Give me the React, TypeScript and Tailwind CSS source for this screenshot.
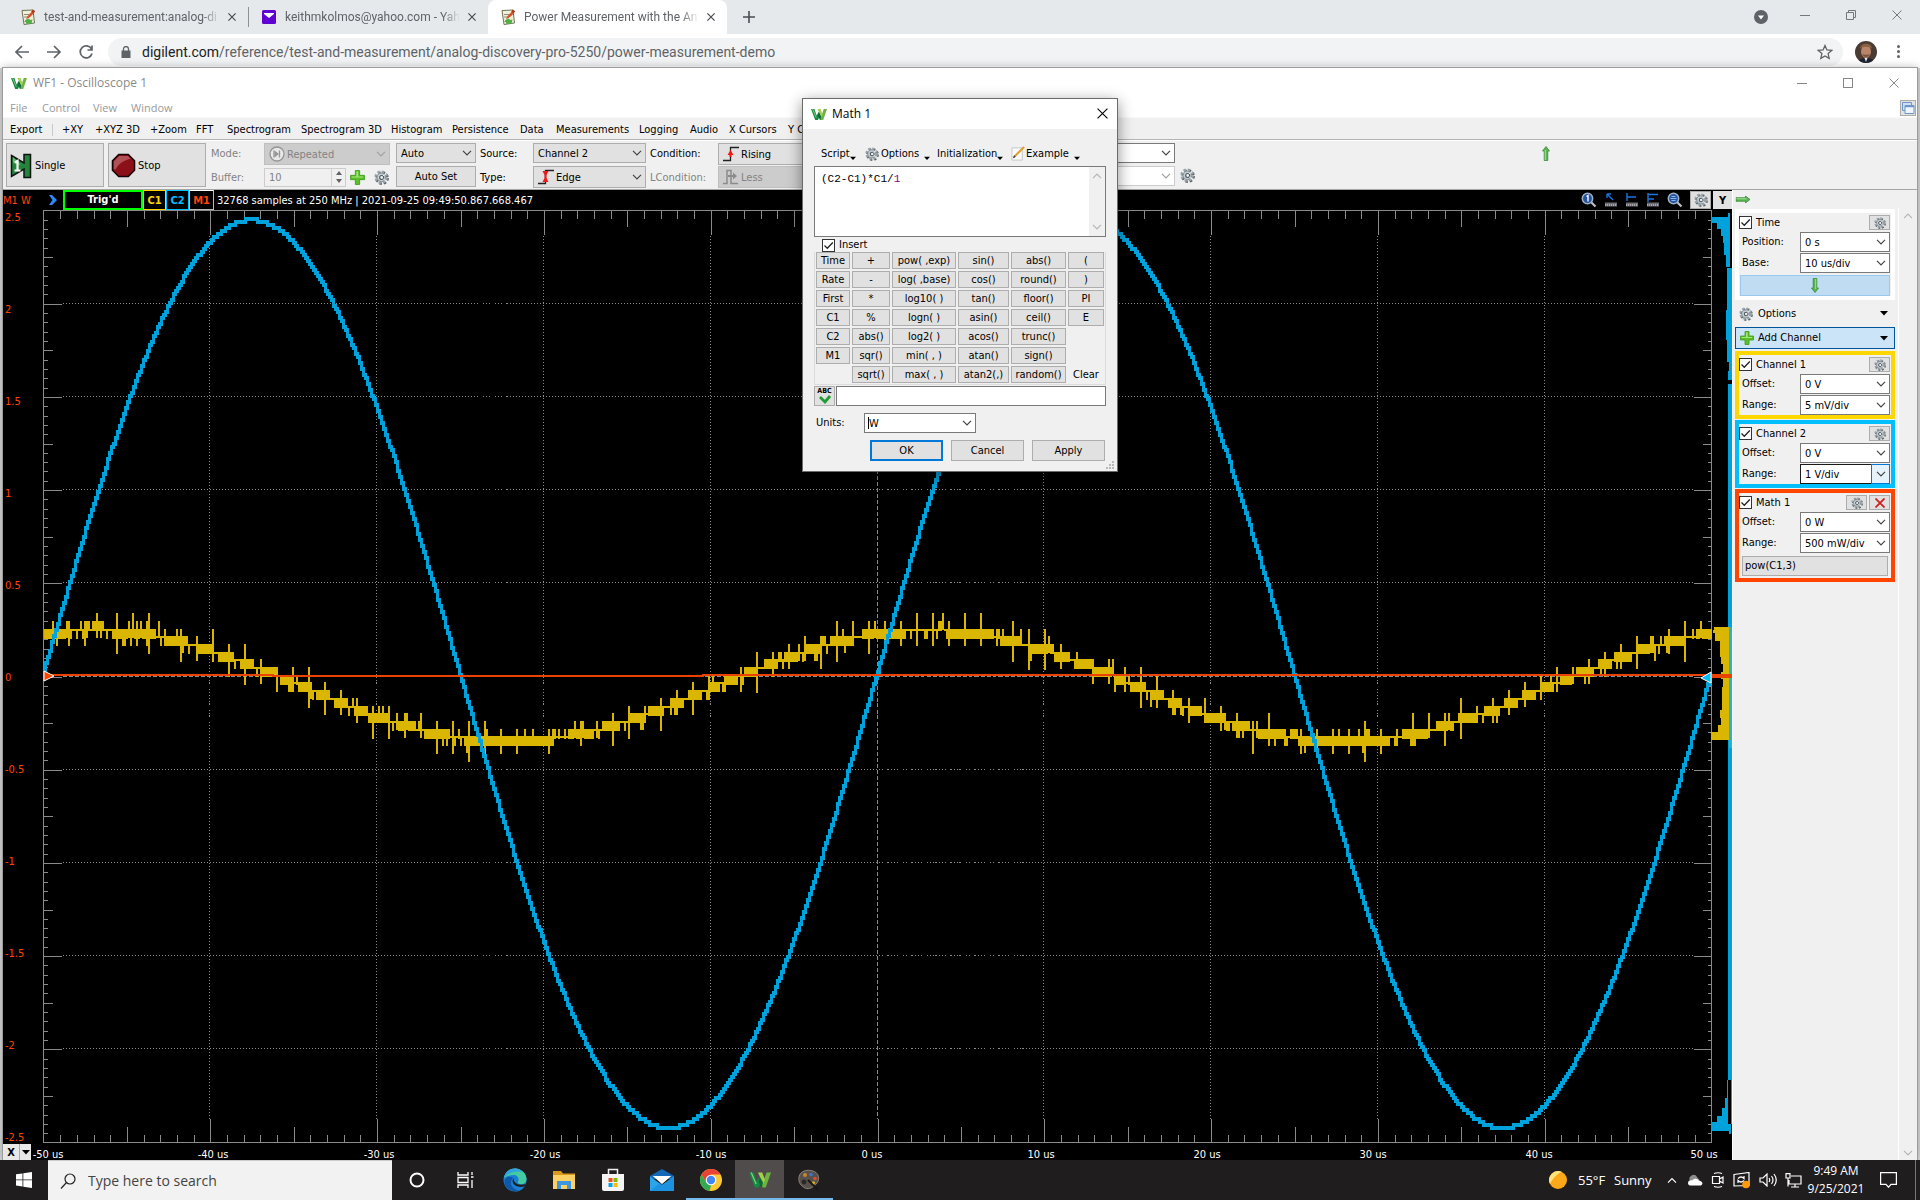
import { ReactNode, useState } from "react";
import clsx from "clsx";

const tahoma = "font-[family-name:'DejaVu_Sans_Condensed','DejaVu_Sans',sans-serif]";
const segoe = "font-[family-name:'Open_Sans','Noto_Sans',sans-serif]";

/* ---------- icons ---------- */

const Chevron = ({ className }: { className?: string }) => (
  <svg viewBox="0 0 10 6" className={clsx("w-[10px] h-[6px]", className)} fill="none" stroke="currentColor" strokeWidth="1.2">
    <path d="M1 .8 5 4.8 9 .8" />
  </svg>
);

const Caret = ({ className }: { className?: string }) => (
  <svg viewBox="0 0 8 5" className={clsx("w-2 h-[5px] shrink-0", className)}>
    <path d="M0 0h8L4 4.5Z" fill="#000" />
  </svg>
);

const Gear = ({ className = "size-[14px]" }: { className?: string }) => (
  <svg viewBox="0 0 16 16" className={clsx("shrink-0", className)}>
    <circle cx="8.6" cy="8.6" r="6" fill="none" stroke="#5d666b" strokeWidth="2.6" strokeDasharray="2.6 2.1" />
    <circle cx="7.6" cy="7.6" r="6" fill="none" stroke="#9aa5ab" strokeWidth="2.4" strokeDasharray="2.6 2.1" />
    <circle cx="7.8" cy="7.8" r="4.6" fill="#c3ccd1" stroke="#7f8a90" strokeWidth="1" />
    <circle cx="8.2" cy="8" r="2.1" fill="#eef1f3" stroke="#4c5459" strokeWidth="1.2" />
    <path d="M9.5 6.2 13 4.2M9.8 9.5l3 2.2" stroke="#eef1f3" strokeWidth="1" />
  </svg>
);

const Plus = ({ className = "size-[14px]" }: { className?: string }) => (
  <svg viewBox="0 0 14 14" className={clsx("shrink-0", className)}>
    <path d="M5 .5h4V5h4.5v4H9v4.5H5V9H.5V5H5Z" fill="#5cbf2a" stroke="#3e9a1c" strokeWidth=".8" />
    <path d="M6 1.5h1.6V6H12v1H1.5V6H6Z" fill="#a5e67c" />
  </svg>
);

const WaveLogo = ({ className = "size-4" }: { className?: string }) => (
  <svg viewBox="0 0 16 13" className={clsx("shrink-0", className)}>
    <path d="M0 1h3.400l2.200 6.400L8 3.500l1.400 3.200L7 12H4.200Z" fill="#158a43" />
    <path d="m8 3.500 1.400 3.200 1.400 2L9.600 12H8.900L7 7.600Z" fill="#0c6a38" />
    <path d="M12.800 1H16l-3.800 11H9.600l.2-2.600Z" fill="#6cb33f" />
    <path d="M6.500 1H9.600l2 5.400L10.600 9 8.200 4.600Z" fill="#a4cf4c" />
    <path d="m1.600 1 3.600 8.500" stroke="#8fd07e" strokeWidth=".9" fill="none" />
  </svg>
);

const WikiIcon = () => (
  <svg viewBox="0 0 16 16" className="size-4 shrink-0">
    <path d="M2 1.5 13 1l1.5 13L4 15.5Z" fill="#f3efd6" stroke="#6d7358" strokeWidth="1" />
    <path d="M4 5.5h5M4 8h4M4.5 12.5h3" stroke="#8b8f7a" strokeWidth="1" />
    <path d="M6 10c1-3 3.5-5 5.5-7l2 1.6C11.5 7 9 9.5 6 10Z" fill="#d6512c" />
    <path d="m11 3 2-2.5 2.2 1.7-1.7 2.4Z" fill="#b63412" />
    <path d="m5 11 4-1.5 1 1.5 2.5-.5-1 4-5 .5Z" fill="#4fae45" />
  </svg>
);

const YahooIcon = () => (
  <svg viewBox="0 0 16 14" className="w-4 h-[14px] shrink-0">
    <rect x="1" y="0" width="14" height="14" rx="1.5" fill="#5f01d1" />
    <path d="M3 3h10v1L8 8 3 4Z" fill="#fff" />
  </svg>
);

const Cross = ({ className = "size-[10px]", width = 1 }: { className?: string; width?: number }) => (
  <svg viewBox="0 0 10 10" className={clsx("shrink-0", className)} stroke="currentColor" strokeWidth={width}>
    <path d="m.5.5 9 9m0-9-9 9" />
  </svg>
);

const EdgeIcon = ({ both, muted }: { both?: boolean; muted?: boolean }) => (
  <svg viewBox="0 0 16 16" className="size-4" fill="none">
    {muted ? (
      <>
        <path d="M0 14.5h4v-13h4v13h7" stroke="#8b8b8b" strokeWidth="1.5" />
        <path d="M5 6h5V3.5L14 7l-4 3.5V8H5Z" fill="#8b8b8b" />
      </>
    ) : (
      <>
        <path d="M0 14.5h7.5V1.5H16" stroke="#222" strokeWidth="1.3" />
        {both ? (
          <path d="M4.500 2h6L8.500 6v3l2 4h-6l2-4V6Z" fill="#f01818" />
        ) : (
          <path d="m7.5 4 3 5h-2v2h-2V9h-2Z" fill="#f01818" />
        )}
      </>
    )}
  </svg>
);

const RepeatIcon = () => (
  <svg viewBox="0 0 16 16" className="size-4">
    <circle cx="8" cy="8" r="7" fill="#e8e8e8" stroke="#969696" strokeWidth="1.3" />
    <path d="M5.5 4.5v7l4.500-3.500Z" fill="#969696" />
    <path d="M5 4.5v7M10.500 4.500v7" stroke="#969696" strokeWidth="1.3" />
  </svg>
);

const GreenArrow = ({ className }: { className?: string }) => (
  <svg viewBox="0 0 8 15" className={clsx("w-2 h-[15px]", className)}>
    <path d="M4 .5 7.5 5H5.8v9.5H2.2V5H.5Z" fill="#5bb552" stroke="#2f7f2e" strokeWidth=".7" />
    <path d="M3.3 4v10" stroke="#a8dd9d" strokeWidth="1" />
  </svg>
);

const Lens = ({ label }: { label: string }) => (
  <svg viewBox="0 0 16 16" className="size-4">
    <path d="m10 10 4.5 4.5" stroke="#b9bfc7" strokeWidth="2.2" />
    <circle cx="6.5" cy="6.5" r="5.2" fill="#24549f" stroke="#9fb0c6" strokeWidth="1.5" />
    {label === "1" ? (
      <path d="M5.5 4.5 7 3.5V9.5" stroke="#fff" strokeWidth="1.4" fill="none" />
    ) : (
      <path d="M3.5 6.5h6M4.5 4.5h4M4.5 8.5h4" stroke="#8fb4ea" strokeWidth="1" />
    )}
  </svg>
);

const CursorIcon = ({ d }: { d: string }) => (
  <svg viewBox="0 0 14 14" className="size-[14px]">
    <path d="M1 11.5h12" stroke="#6e6e76" strokeWidth="4" />
    <path d="M1 12h12" stroke="#a5a5aa" strokeWidth="2" strokeDasharray="1 1" />
    <path d={d} stroke="#1a76e0" strokeWidth="1.4" fill="none" />
  </svg>
);

/* ---------- controls ---------- */

const Select = ({
  label,
  value,
  className,
  tone = "gray",
  icon,
  disabled,
}: {
  label: string;
  value: string;
  className?: string;
  tone?: "gray" | "white" | "muted" | "faint" | "focus";
  icon?: ReactNode;
  disabled?: boolean;
}) => (
  <div
    className={clsx(
      "relative border",
      tone === "gray" && "bg-[#e1e1e1] border-[#adadad]",
      tone === "white" && "bg-white border-[#7a7a7a]",
      tone === "focus" && "bg-white border-[#1a1a1a]",
      tone === "muted" && "bg-[#cccccc] border-[#bfbfbf] text-[#838383]",
      tone === "faint" && "bg-white border-[#cccccc] text-[#a0a0a0]",
      className,
    )}
  >
    {icon && <span className="absolute left-1 inset-y-0 flex items-center pointer-events-none">{icon}</span>}
    <select
      aria-label={label}
      disabled={disabled}
      className={clsx("appearance-none block w-full h-full bg-transparent pt-px pr-4 outline-none opacity-100", icon ? "pl-[22px]" : "pl-1")}
    >
      <option>{value}</option>
    </select>
    <span
      className={clsx(
        "absolute right-0 inset-y-0 w-[17px] flex items-center justify-center pointer-events-none",
        tone === "focus" && "bg-[#e5f1fb] outline outline-[#0078d7]",
        tone === "muted" || tone === "faint" ? "text-[#a0a0a0]" : "text-[#444]",
      )}
    >
      <Chevron />
    </span>
  </div>
);

const CheckBox = ({ label }: { label: string }) => {
  const [on, setOn] = useState(true);
  return (
    <label className="flex items-center gap-1">
      <span className="relative flex">
        <input type="checkbox" checked={on} onChange={() => setOn(!on)} className="appearance-none size-[13px] border border-[#333] bg-white" />
        {on && (
          <svg viewBox="0 0 13 13" className="absolute inset-0 size-[13px] pointer-events-none" fill="none" stroke="#222" strokeWidth="1.3">
            <path d="m2.5 6.5 2.8 2.8L10.8 3.5" />
          </svg>
        )}
      </span>
      {label}
    </label>
  );
};

/* ---------- browser behind the window ---------- */

const Tab = ({ title, icon, active, className }: { title: string; icon: ReactNode; active?: boolean; className: string }) => (
  <div className={clsx("flex items-center h-[34px] gap-2", active && "bg-white rounded-t-lg", className)}>
    {icon}
    <span className="flex-1 whitespace-nowrap mask-r-from-90%">{title}</span>
    <button aria-label="Close tab" className="mr-3 text-[#4a4d51]">
      <Cross className="size-2" width={1.5} />
    </button>
  </div>
);

const Browser = () => (
  <div className={clsx("text-[12px] text-[#5f6368]", segoe)}>
    <div className="flex items-center h-[34px] bg-[#e5e9ec] font-[family-name:Roboto,'Open_Sans',sans-serif]">
      <Tab title="test-and-measurement:analog-di" icon={<WikiIcon />} className="w-[228px] ml-5" />
      <div className="w-px h-5 bg-[#8d9196]" />
      <Tab title="keithmkolmos@yahoo.com - Yah" icon={<YahooIcon />} className="w-[239px] pl-3" />
      <Tab title="Power Measurement with the An" icon={<WikiIcon />} active className="w-[239px] pl-3" />
      <button aria-label="New tab" className="ml-4">
        <svg viewBox="0 0 12 12" className="size-3" stroke="#4a4d51" strokeWidth="1.6">
          <path d="M6 0v12M0 6h12" />
        </svg>
      </button>
      <div className="flex-1" />
      <svg viewBox="0 0 14 14" className="size-[14px]">
        <circle cx="7" cy="7" r="7" fill="#5f6368" />
        <path d="M4 5.5h6L7 9.5Z" fill="#fff" />
      </svg>
      <div className="flex items-center gap-9 ml-8 mr-[18px] mb-1 text-[#777]">
        <button aria-label="Minimize browser" className="w-[10px] h-px bg-[#777]" />
        <button aria-label="Restore browser">
          <svg viewBox="0 0 10 10" className="size-[10px]" fill="none" stroke="currentColor">
            <path d="M.5 2.5h7v7h-7ZM2.5 2.5v-2h7v7h-2" />
          </svg>
        </button>
        <button aria-label="Close browser">
          <Cross />
        </button>
      </div>
    </div>
    <div className="flex items-center h-[34px] pt-px bg-white text-[#5f6368]">
      <div className="flex items-center gap-4 pl-[14px] w-[108px]">
        {["M15 8H2M8 2 2 8l6 6", "M1 8h13M8 2l6 6-6 6", "M13.5 5A6 6 0 1 0 14 9.5M14 1.5V6H9.5"].map((d, i) => (
          <button key={d} aria-label={["Back", "Forward", "Reload"][i]}>
            <svg viewBox="0 0 16 16" className="size-4" fill="none" stroke="#5f6368" strokeWidth="1.7">
              <path d={d} />
            </svg>
          </button>
        ))}
      </div>
      <div className="flex items-center flex-1 h-7 rounded-full bg-[#f1f3f4] pl-[13px] pr-[10px]">
        <svg viewBox="0 0 10 12" className="w-[10px] h-3 mr-[11px]">
          <path d="M.5 4.5h9V12h-9Z" fill="#5f6368" />
          <path d="M2.5 5V3a2.5 2.5 0 0 1 5 0v2" fill="none" stroke="#5f6368" strokeWidth="1.3" />
        </svg>
        <span className="text-[14px] font-[family-name:Roboto,'Open_Sans',sans-serif]">
          <span className="text-[#202124]">digilent.com</span>/reference/test-and-measurement/analog-discovery-pro-5250/power-measurement-demo
        </span>
        <svg viewBox="0 0 16 16" className="size-4 ml-auto" fill="none" stroke="#5f6368" strokeWidth="1.3">
          <path d="m8 1.5 1.9 4.5 4.9.4-3.7 3.2 1.1 4.8L8 11.9l-4.2 2.5 1.1-4.8L1.2 6.4l4.9-.4Z" />
        </svg>
      </div>
      <svg viewBox="0 0 22 22" className="size-[22px] ml-3">
        <circle cx="11" cy="11" r="11" fill="#4a3b33" />
        <ellipse cx="11" cy="10.5" rx="5" ry="6.5" fill="#b98468" />
        <path d="M5 8c0-7 12-7 12 0-1-3-11-3-12 0Z" fill="#8a6242" />
        <path d="M4 19.5c2-3.5 12-3.5 14 0-4 3.2-10 3.2-14 0Z" fill="#1d2230" />
        <path d="M9.5 17h3L11 21Z" fill="#e8e8ec" />
        <path d="M7 13c2 4 6 4 8 0-1 1-7 1-8 0Z" fill="#7a5038" />
      </svg>
      <button aria-label="Browser menu" className="ml-5 mr-5 flex flex-col gap-[2px]">
        <i className="size-[3px] rounded-full bg-[#5f6368]" />
        <i className="size-[3px] rounded-full bg-[#5f6368]" />
        <i className="size-[3px] rounded-full bg-[#5f6368]" />
      </button>
    </div>
  </div>
);

/* ---------- scope window ---------- */

const toolbarItems = [
  ["+XY", "w-[33px]"],
  ["+XYZ 3D", "w-[55px]"],
  ["+Zoom", "w-[46px]"],
  ["FFT", "w-[31px]"],
  ["Spectrogram", "w-[74px]"],
  ["Spectrogram 3D", "w-[90px]"],
  ["Histogram", "w-[61px]"],
  ["Persistence", "w-[68px]"],
  ["Data", "w-9"],
  ["Measurements", "w-[83px]"],
  ["Logging", "w-[51px]"],
  ["Audio", "w-[39px]"],
  ["X Cursors", "w-[59px]"],
  ["Y Cursors", "w-[59px]"],
];

const WindowHead = () => (
  <>
    <div className={clsx("flex items-center h-[30px] pl-2 text-[12px] text-[#8a8a8a] bg-white", segoe)}>
      <WaveLogo className="w-4 h-[13px] mr-[6px]" />
      WF1 - Oscilloscope 1
      <div className="ml-auto flex items-center gap-9 pr-[18px] text-[#888]">
        <button aria-label="Minimize" className="w-[10px] h-px bg-[#888]" />
        <button aria-label="Maximize" className="size-[10px] border border-[#888]" />
        <button aria-label="Close">
          <Cross />
        </button>
      </div>
    </div>
    <div className={clsx("flex items-center h-[19px] pl-[7px] pr-px text-[11px] text-[#9a9a9a] bg-white", segoe)}>
      <button className="w-8 text-left">File</button>
      <button className="w-[51px] text-left">Control</button>
      <button className="w-[38px] text-left">View</button>
      <button>Window</button>
      <button aria-label="Dock window" className="ml-auto size-4 border border-[#adadad] bg-[#e1e1e1]">
        <svg viewBox="0 0 14 14" className="size-[14px]">
          <path d="M1.5 1.5h9v8h-9Z" fill="#cfe0f5" stroke="#6f96c9" />
          <path d="M4 4.5h9v8H4Z" fill="#eef5fd" stroke="#6f96c9" />
          <path d="M4 5.5h9" stroke="#6f96c9" strokeWidth="1.5" />
        </svg>
      </button>
    </div>
    <div className="flex items-center h-[23px] pl-[7px] pt-[2px] border-t border-[#f8f8f8] border-b border-b-[#b4b4b4]">
      <button className="w-[42px] text-left">Export</button>
      <div className="w-px h-3 bg-[#c8c8c8] mr-[9px]" />
      {toolbarItems.map(([name, width]) => (
        <button key={name} className={clsx("text-left whitespace-nowrap shrink-0", width)}>
          {name}
        </button>
      ))}
    </div>
  </>
);

const Controls = () => (
  <div className="flex items-start h-[50px] pl-[3px] pt-[2px] border-t border-white border-b border-b-[#a5a5a5]">
    <button className="flex items-center gap-[3px] w-[98px] h-11 pt-px pl-[3px] border border-[#adadad] bg-[#e1e1e1]">
      <svg viewBox="0 0 22 26" className="w-[22px] h-[26px]">
        <path d="M1.5 2.5 14 10V1.5h6.500v23H14V16L1.500 23.500Z" fill="#23853b" stroke="#111" strokeWidth="1.5" />
        <path d="M3 4v6l8 2Z" fill="#66b878" />
        <path d="M5 9.5 7.500 8v9.500M4.500 17.500h6" stroke="#fff" strokeWidth="2.2" fill="none" />
      </svg>
      Single
    </button>
    <button className="flex items-center gap-[2px] w-[98px] h-11 pt-px pl-[2px] ml-1 border border-[#adadad] bg-[#e1e1e1]">
      <svg viewBox="0 0 26 26" className="size-[25px]">
        <path d="M8 1.5h10l6.500 6.500v10L18 24.500H8L1.500 18V8Z" fill="#8c1018" stroke="#160506" strokeWidth="1.5" />
        <path d="M8.500 3h9l3 3C14 7 7 12 5 17H3V8.500Z" fill="#c2757a" opacity=".65" />
      </svg>
      Stop
    </button>
    <div className="grid grid-cols-[53px_126px] gap-y-px ml-[5px] text-[#838383]">
      <span className="h-[22px] leading-[22px]">Mode:</span>
      <Select label="Mode" value="Repeated" tone="muted" icon={<RepeatIcon />} disabled className="h-[22px]" />
      <span className="h-[21px] leading-[23px]">Buffer:</span>
      <div className="flex items-center pt-px">
        <div className="relative w-[82px] h-[19px] border border-[#cccccc]">
          <input aria-label="Buffer" defaultValue="10" disabled className="w-full h-full pl-1 bg-transparent" />
          <span className="absolute right-0 inset-y-0 w-[14px] flex flex-col items-center justify-center border-l border-[#d0d0d0] bg-[#f0f0f0]">
            <svg viewBox="0 0 6 12" className="w-[6px] h-3" fill="#606060">
              <path d="M3 0 6 4H0ZM3 12 0 8h6Z" />
            </svg>
          </span>
        </div>
        <button aria-label="Add buffer" className="ml-1">
          <Plus className="size-[15px]" />
        </button>
        <button aria-label="Buffer settings" className="ml-[9px]">
          <Gear className="size-[15px]" />
        </button>
      </div>
    </div>
    <div className="flex flex-col gap-[3px] ml-[6px] w-[80px]">
      <Select label="Trigger mode" value="Auto" className="h-5" />
      <button className="h-[21px] pt-px border border-[#adadad] bg-[#e1e1e1]">Auto Set</button>
    </div>
    <div className="grid grid-cols-[53px_113px] gap-y-[2px] ml-1">
      <span className="leading-[21px]">Source:</span>
      <Select label="Source" value="Channel 2" className="h-5" />
      <span className="leading-[24px] h-[22px]">Type:</span>
      <Select label="Type" value="Edge" icon={<EdgeIcon both />} className="h-[22px]" />
    </div>
    <div className="grid grid-cols-[68px_113px] gap-y-px ml-1">
      <span className="leading-[21px]">Condition:</span>
      <Select label="Condition" value="Rising" icon={<EdgeIcon />} className="h-[22px]" />
      <span className="leading-[24px] h-[22px] text-[#838383]">LCondition:</span>
      <Select label="LCondition" value="Less" tone="muted" icon={<EdgeIcon muted />} disabled className="h-[22px]" />
    </div>
    <div className="flex flex-col gap-[3px] ml-[204px] w-[140px]">
      <Select label="Level" value="" tone="white" className="h-5" />
      <Select label="Hysteresis" value="" tone="faint" disabled className="h-5" />
    </div>
    <button aria-label="Trigger settings" className="ml-[5px] mt-[25px]">
      <Gear className="size-[15px]" />
    </button>
    <GreenArrow className="ml-[347px] mt-[3px]" />
  </div>
);

/* ---------- plot ---------- */

const L = 40.5;
const R = 1708.5;
const T = 0.5;
const B = 932.5;
const CX = 874.5;
const CY = 466.5;
const DX = (R - L) / 10;
const DY = (B - T) / 10;
const PERIOD = 834;

const noise = (n: number) => {
  const s = Math.sin(n * 127.1 + 11.7) * 43758.5453;
  return s - Math.floor(s);
};

const ticks = () => {
  let d = "";
  for (let i = 1; i < 100; i++) {
    const x = Math.round(L + (i * DX) / 10) + 0.5;
    const h = i % 10 === 0 ? 24 : i % 5 === 0 ? 16 : 8;
    d += `M${x} ${T}v${h}M${x} ${B}v${-h}`;
    const y = Math.round(T + (i * DY) / 10) + 0.5;
    const w = i % 10 === 0 ? 18 : i % 5 === 0 ? 9 : 4;
    d += `M${L} ${y}h${w}M${R} ${y}h${-w}`;
  }
  return d;
};

const gridLines = () => {
  let d = "";
  for (let i = 1; i < 10; i++) {
    if (i === 5) continue;
    d += `M${Math.round(L + i * DX) - 0.5} ${T + 25}V${B - 24}`;
    d += `M${L + 19} ${Math.round(T + i * DY) - 0.5}H${R - 18}`;
  }
  return d;
};

// one 3px wide bar per sample column, tall enough to touch the next one
const voltageBars = () => {
  const at = (x: number) => Math.round((464 - 454 * Math.sin((2 * Math.PI * (x - 40)) / PERIOD)) / 3) * 3;
  let d = "";
  for (let x = 41; x < 1707; x += 2) {
    const a = at(x);
    const b = at(x + 2);
    d += `M${x} ${Math.min(a, b) - 2}h3v${Math.abs(a - b) + 4}h-3Z`;
  }
  return d;
};

// sensor trace: toggles between two neighbouring ADC codes, with a spike every few samples
const currentBars = () => {
  const code = 7.7;
  const y0 = 535;
  let d = "";
  for (let x = 41; x < 1708; x += 2) {
    const v = 7.7 - 7.25 * Math.cos((2 * Math.PI * (x - 505)) / PERIOD);
    const base = Math.floor(v);
    const frac = v - base;
    let lo = base;
    let hi = base + 1;
    if (frac < 0.14) hi = base;
    if (frac > 0.86) lo = base + 1;
    if (lo === hi && noise(x) > 0.65) {
      if (noise(x + 2) > 0.5) hi += 1;
      else lo -= 1;
    }
    if (noise(x + 0.3) > 0.94) hi += 1;
    if (noise(x + 0.7) > 0.94) lo -= 1;
    const k = Math.floor((x - 41) / 2);
    if (k % 8 === 4) {
      hi += 1;
      lo -= noise(x + 9) > 0.35 ? 1 : 0;
    }
    if (k % 8 === 4 && noise(x + 5) > 0.45) {
      hi += noise(x + 1) > 0.5 ? 1 : 0;
      lo -= 1;
    }
    const top = Math.round(y0 - hi * code) - 1;
    d += `M${x} ${top}h2v${Math.round((hi - lo) * code) + 2}h-2Z`;
  }
  return d;
};

const voltageHistogram =
  "M1708 7h17v-4h2v54h-4v-12h-2v-12h-1v-7h-2v-7h-4v-6h-6ZM1724 58h5v112h-4l1-18h-2v-22h-1v-30h1ZM1725 174h4v740h-4ZM1708 918v3h18v3h2V870h-4v18h-2v10h-3v8h-5v6h-6Z";
const currentHistogram =
  "M1711 417h18v121h-3v-8h-18v-8h7v-7h3v-7h-1v-8h2v-23h1v-8h-2v-7h2v-8h-2v-7h-1v-16h-5v-8h-2Z";

const xLabels: [string, number][] = [
  ["-50 us", 45],
  ["-40 us", 210],
  ["-30 us", 376],
  ["-20 us", 542],
  ["-10 us", 708],
  ["0 us", 869],
  ["10 us", 1038],
  ["20 us", 1204],
  ["30 us", 1370],
  ["40 us", 1536],
  ["50 us", 1701],
];
const yLabels = ["2.5", "2", "1.5", "1", "0.5", "0", "-0.5", "-1", "-1.5", "-2", "-2.5"];

const Plot = () => (
  <div className="relative">
    <svg viewBox="0 0 1729 950" className="block w-full" shapeRendering="crispEdges" fontSize="11">
      <rect width="1729" height="950" fill="#000" />
      <path d={gridLines()} stroke="#8a8a8a" strokeDasharray="1 2" fill="none" />
      <path d={`M${CX} ${T + 25}V${B - 24}M${L + 19} ${CY}H${R - 18}`} stroke="#8a8a8a" strokeDasharray="4 2" />
      <path d={`M${L} ${T}H${R}V${B}H${L}Z${ticks()}`} stroke="#8a8a8a" fill="none" />
      <path d={currentBars()} fill="#dab600" />
      <path d={voltageBars()} fill="#00a2dc" />
      <path d="M41 465H270V466H700V465H1708" stroke="#ea4200" strokeWidth="2" fill="none" />
      <path d={voltageHistogram} fill="#00a2dc" />
      <path d={currentHistogram} fill="#dab600" />
      <path d="M1727.500 417v121" stroke="#22b5c8" strokeWidth="3" />
      <path d="M1709 466h20" stroke="#ea4200" strokeWidth="4" />
      <g shapeRendering="auto">
        <path d="m41 461 10 5-10 5Z" fill="#ff4500" stroke="#fff" />
        <path d="m1708 462-10 6 10 5Z" fill="#00bfff" stroke="#fff" />
      </g>
      <g fill="#ff4500">
        {yLabels.map((t, i) => (
          <text key={t} x="2" y={11 + i * 92}>
            {t}
          </text>
        ))}
      </g>
      <g fill="#fff" textAnchor="middle">
        {xLabels.map(([t, x]) => (
          <text key={t} x={x} y="948">
            {t}
          </text>
        ))}
      </g>
    </svg>
    <div className="absolute left-0 bottom-0 flex h-4 bg-[#e8e8e8] text-black font-bold">
      <button className="w-[17px] border-r border-[#aaa] leading-[17px]">X</button>
      <button aria-label="X axis menu" className="w-[11px] flex items-center justify-center">
        <Caret />
      </button>
    </div>
  </div>
);

const StatusBar = () => (
  <div className="flex items-center h-5 bg-black text-white">
    <span className="w-[43px] pt-px text-[#ff4500] whitespace-nowrap">M1 W</span>
    <svg viewBox="0 0 10 12" className="w-[10px] h-3 ml-[2px] mr-[5px]">
      <path d="M1 1h3l5 5-5 5H1l3.5-5Z" fill="#2e8bff" />
    </svg>
    <button className="w-20 h-5 border-2 border-[#00ff00] font-bold leading-4">Trig'd</button>
    <button className="w-[23px] h-5 border border-[#ffd700] text-[#ffd700] font-bold leading-[19px]">C1</button>
    <button className="w-[23px] h-5 border border-[#00bfff] text-[#00bfff] font-bold leading-[19px]">C2</button>
    <button className="w-[25px] h-5 border border-[#bbb] border-t-white text-[#ff4500] font-bold leading-[19px]">M1</button>
    <span className="ml-[3px] pt-px">32768 samples at 250 MHz | 2021-09-25 09:49:50.867.668.467</span>
    <div className="ml-auto flex items-center gap-[7px]">
      <Lens label="1" />
      <CursorIcon d="M3 1l6 6M3 1v4M3 1h4" />
      <CursorIcon d="M2 0v8M2 4h9" />
      <CursorIcon d="M2 0v9M2 1.5h10M2 6h6" />
      <Lens label="all" />
      <div className="flex gap-[2px]">
        <button aria-label="Plot settings" className="w-[21px] h-[18px] flex items-center justify-center bg-[#e1e1e1] border border-[#adadad]">
          <Gear />
        </button>
        <button className="w-[19px] h-[18px] bg-[#e1e1e1] text-black font-bold leading-[19px]">Y</button>
      </div>
    </div>
  </div>
);

/* ---------- side panel ---------- */

const Field = ({ label, value, tone = "white" }: { label: string; value: string; tone?: "white" | "focus" }) => (
  <div className="flex items-center pl-[3px]">
    <span className="w-[58px]">{label}:</span>
    <Select label={label} value={value} tone={tone} className="flex-1 h-5" />
  </div>
);

const Panel = ({
  title,
  border,
  remove,
  children,
}: {
  title: string;
  border: string;
  remove?: boolean;
  children: ReactNode;
}) => (
  <section className={clsx("flex flex-col gap-px border-4 pt-px pr-px", border)}>
    <div className="flex items-center h-[17px]">
      <CheckBox label={title} />
      <div className="ml-auto flex gap-[2px]">
        <button aria-label={`${title} settings`} className="w-[21px] h-[15px] flex items-center justify-center border border-[#adadad] bg-[#e1e1e1]">
          <Gear className="size-3" />
        </button>
        {remove && (
          <button aria-label={`Remove ${title}`} className="w-[21px] h-[15px] flex items-center justify-center border border-[#adadad] bg-[#e1e1e1] text-[#cc2222]">
            <Cross width={1.8} />
          </button>
        )}
      </div>
    </div>
    {children}
  </section>
);

const SidePanel = () => (
  <aside className="flex w-[185px] shrink-0 border-l border-white">
    <div className="w-[165px] pl-[2px] pr-[3px]">
      <button aria-label="Collapse" className="flex items-center h-[19px] pl-1">
        <GreenArrow className="rotate-90 -my-2" />
      </button>
      <Panel title="Time" border="border-white">
        <Field label="Position" value="0 s" />
        <Field label="Base" value="10 us/div" />
        <button aria-label="Apply time" className="h-[21px] mt-px ml-px flex items-center justify-center border border-[#99c9ef] bg-[#bfdcf3]">
          <GreenArrow className="rotate-180" />
        </button>
      </Panel>
      <button className="flex items-center w-full h-[27px] pl-1 pr-[7px]">
        <Gear />
        <span className="ml-[5px] mr-auto">Options</span>
        <Caret />
      </button>
      <button className="flex items-center w-full h-[22px] mb-[2px] pl-1 pr-[6px] border border-[#005499] bg-[#cce4f7]">
        <Plus />
        <span className="ml-1 mr-auto">Add Channel</span>
        <Caret />
      </button>
      <div className="flex flex-col gap-px">
        <Panel title="Channel 1" border="border-[#ffd700]">
          <Field label="Offset" value="0 V" />
          <Field label="Range" value="5 mV/div" />
        </Panel>
        <Panel title="Channel 2" border="border-[#00bfff]">
          <Field label="Offset" value="0 V" />
          <Field label="Range" value="1 V/div" tone="focus" />
        </Panel>
        <Panel title="Math 1" border="border-[#ff4500]" remove>
          <Field label="Offset" value="0 W" />
          <Field label="Range" value="500 mW/div" />
          <button className="h-5 ml-[3px] mr-[2px] mt-[2px] mb-[2px] pl-[2px] text-left border border-[#adadad] bg-[#e1e1e1]">pow(C1,3)</button>
        </Panel>
      </div>
    </div>
    <div className="flex-1 mt-[18px] flex flex-col items-center justify-between pt-[5px] pb-1 border-l border-white text-[#b5b5b5]">
      <Chevron className="rotate-180" />
      <Chevron />
    </div>
  </aside>
);

/* ---------- math dialog ---------- */

const keypad = [
  ["Time", "+", "pow( ,exp)", "sin()", "abs()", "("],
  ["Rate", "-", "log( ,base)", "cos()", "round()", ")"],
  ["First", "*", "log10( )", "tan()", "floor()", "PI"],
  ["C1", "%", "logn( )", "asin()", "ceil()", "E"],
  ["C2", "abs()", "log2( )", "acos()", "trunc()", ""],
  ["M1", "sqr()", "min( , )", "atan()", "sign()", ""],
  ["", "sqrt()", "max( , )", "atan2(,)", "random()", "Clear"],
];

const MathDialog = () => {
  const [formula, setFormula] = useState("(C2-C1)*C1/1");
  return (
    <div
      role="dialog"
      aria-label="Math 1"
      className="absolute left-[802px] top-[98px] w-[316px] border border-[#6b6b6b] bg-[#f0f0f0] shadow-[0_4px_14px_rgba(0,0,0,0.45)]"
    >
      <div className={clsx("flex items-center h-[30px] pl-2 pr-[9px] bg-white text-[12px]", segoe)}>
        <WaveLogo className="w-4 h-[13px] mr-[5px]" />
        Math 1
        <button aria-label="Close dialog" className="ml-auto mb-[2px]">
          <Cross className="size-[11px]" />
        </button>
      </div>
      <div className="flex flex-col px-[11px] pb-[10px]">
        <div className="flex items-end h-8 pl-[7px] pb-[5px] mt-[5px]">
          <button className="flex items-end w-11">
            Script
            <Caret className="w-[6px] h-1" />
          </button>
          <button className="flex items-end w-[72px]">
            <Gear />
            <span className="ml-[2px] mr-[5px]">Options</span>
            <Caret className="w-[6px] h-1" />
          </button>
          <button className="flex items-end w-[74px]">
            Initialization
            <Caret className="w-[6px] h-1" />
          </button>
          <button className="flex items-end">
            <svg viewBox="0 0 16 16" className="size-[15px]">
              <path d="M1 2h11v13H1Z" fill="#fafafa" stroke="#c4c4c4" />
              <path d="M3 12 14 1" stroke="#e0a030" strokeWidth="2.2" />
              <path d="m2.5 12.5 2-2" stroke="#444" strokeWidth="1.5" />
            </svg>
            <span className="mr-[5px]">Example</span>
            <Caret className="w-[6px] h-1" />
          </button>
        </div>
        <div className="relative h-[71px] border border-[#7a7a7a] bg-white font-[family-name:'Liberation_Mono',monospace] text-[11px]">
          <pre aria-hidden="true" className="absolute left-[6px] top-1 font-[inherit] leading-4">
            {formula.slice(0, -1)}
            <span className="text-[#8b008b]">{formula.slice(-1)}</span>
          </pre>
          <textarea
            aria-label="Formula"
            value={formula}
            onChange={(e) => setFormula(e.target.value)}
            className="relative block w-full h-full pl-[6px] pt-1 pr-4 resize-none bg-transparent text-transparent caret-black leading-4 outline-none"
          />
          <div className="absolute right-0 inset-y-0 w-4 flex flex-col items-center justify-between py-[6px] bg-[#f0f0f0] text-[#b5b5b5]">
            <Chevron className="rotate-180" />
            <Chevron />
          </div>
        </div>
        <div className="pl-2 pt-px flex">
          <CheckBox label="Insert" />
        </div>
        <div className="grid grid-cols-[34px_38px_64px_51px_55px_36px] auto-rows-[17px] gap-[2px] pl-px border-x border-b border-[#dcdcdc] pb-px">
          {keypad.flat().map((k, i) =>
            k === "" ? (
              <span key={i} />
            ) : (
              <button key={i} className={clsx("leading-4 whitespace-nowrap", k !== "Clear" && "border border-[#adadad] bg-[#e1e1e1]")}>
                {k}
              </button>
            ),
          )}
        </div>
        <div className="flex gap-px mt-px">
          <button aria-label="Check formula" className="w-[21px] h-5 border border-[#adadad] bg-[#e1e1e1] flex flex-col items-center">
            <span className="text-[7px] leading-[8px] font-bold">ABC</span>
            <svg viewBox="0 0 14 9" className="w-[14px] h-[9px]">
              <path d="m2 2 5 5 5-6" stroke="#1f9d35" strokeWidth="2.8" fill="none" />
            </svg>
          </button>
          <input aria-label="Message" className="flex-1 min-w-0 h-5 border border-[#7a7a7a] bg-white px-1" />
        </div>
        <div className="flex items-center mt-[7px] pl-[2px]">
          <label htmlFor="units" className="w-12">
            Units:
          </label>
          <div className="relative w-28 h-5">
            <input id="units" defaultValue="W" className="block w-full h-full pl-1 border border-[#7a7a7a] bg-white outline-none" />
            <span className="absolute left-1 top-1 w-px h-3 bg-black" />
            <Chevron className="absolute right-1 top-[7px] text-[#444]" />
          </div>
        </div>
        <div className="flex justify-end gap-2 mt-[7px] pr-px">
          <button className="w-[73px] h-[21px] border-2 border-[#0078d7] bg-[#e1e1e1] leading-[17px]">OK</button>
          <button className="w-[73px] h-[21px] border border-[#adadad] bg-[#e1e1e1]">Cancel</button>
          <button className="w-[73px] h-[21px] border border-[#adadad] bg-[#e1e1e1]">Apply</button>
        </div>
      </div>
      <svg viewBox="0 0 8 8" className="absolute right-[3px] bottom-[2px] size-2" fill="#b9b9b9">
        <path d="M6 0h2v2H6ZM3 3h2v2H3ZM6 3h2v2H6ZM0 6h2v2H0ZM3 6h2v2H3ZM6 6h2v2H6Z" />
      </svg>
    </div>
  );
};

/* ---------- taskbar ---------- */

const TaskButton = ({ name, state, children }: { name: string; state?: "open" | "active"; children: ReactNode }) => (
  <button
    aria-label={name}
    className={clsx(
      "w-[49px] h-10 pt-[2px] flex items-center justify-center border-b-2 bg-clip-padding",
      state === "active" && "bg-[#4f4c4b] border-[#76b9ed]",
      state === "open" && "border-[#76b9ed]",
      !state && "border-transparent",
    )}
  >
    {children}
  </button>
);

const Taskbar = () => (
  <footer className={clsx("flex items-center h-10 bg-[#201d1f] text-white", segoe)}>
    <button aria-label="Start" className="w-12 h-10 flex items-center justify-center">
      <svg viewBox="0 0 16 16" className="size-4" fill="#fff">
        <path d="m0 2.3 6.5-.9v6.100H0ZM7.3 1.3 16 0v7.5H7.3ZM0 8.3h6.5v6.200L0 13.6ZM7.3 8.3H16V16l-8.700-1.300Z" />
      </svg>
    </button>
    <label className="flex items-center w-[344px] h-10 pl-3 bg-[#f2f2f2] border-t border-[#ccc]">
      <svg viewBox="0 0 16 16" className="size-4 mr-3" fill="none" stroke="#222" strokeWidth="1.2">
        <circle cx="10" cy="6" r="5" />
        <path d="M6.5 9.5 1 15.5" />
      </svg>
      <input aria-label="Search" placeholder="Type here to search" className="flex-1 bg-transparent text-[14px] outline-none placeholder:text-[#444]" />
    </label>
    <TaskButton name="Cortana">
      <svg viewBox="0 0 16 16" className="size-4" fill="none" stroke="#fff" strokeWidth="2">
        <circle cx="8" cy="8" r="6.5" />
      </svg>
    </TaskButton>
    <TaskButton name="Task view">
      <svg viewBox="0 0 18 16" className="w-[18px] h-4" fill="none" stroke="#fff" strokeWidth="1.3">
        <path d="M1 0v3h10V0M1 5.5h10v5H1ZM1 16v-3h10v3M15 0v3M15 8v8M14 5h2.500" />
      </svg>
    </TaskButton>
    <TaskButton name="Edge">
      <svg viewBox="0 0 24 24" className="size-6">
        <circle cx="12" cy="12" r="11.5" fill="#1b7fd4" />
        <path d="M1 10C2 3 8 .5 12 .5 19 .5 23.5 6 23.5 11c0 3-2 5-5 5-2.500 0-4-1-3.500-2 2-4-1-7-4-7-5 0-9 2-10 3Z" fill="#44cba0" />
        <path d="M1 10C2 3 8 .5 12 .5c3 0 6 1.5 8 4C14 2 6 4 1 10Z" fill="#2fa5de" />
        <path d="M10 10c-4 4-2 11 6 12.5-8 2.5-15-3-14.500-10 1-4 6-5 8.500-2.500Z" fill="#0f57a8" />
        <path d="M11 9.500c-1.500 5 4 9 11.500 6.500l-1 2.500c-6 1.500-12-1-12-6Z" fill="#201d1f" />
      </svg>
    </TaskButton>
    <TaskButton name="File Explorer">
      <svg viewBox="0 0 22 20" className="w-[22px] h-5">
        <path d="M0 1h8l2 2.5h12V18H0Z" fill="#d99a1c" />
        <path d="M0 5h22v14H0Z" fill="#fbd165" />
        <path d="M4 19v-8h14v8h-4v-4H8v4Z" fill="#3d97e0" />
      </svg>
    </TaskButton>
    <TaskButton name="Store">
      <svg viewBox="0 0 22 24" className="w-[22px] h-6">
        <path d="M6.5 7V1.5h9V7" fill="none" stroke="#eee" strokeWidth="1.5" />
        <path d="M0 6h22v15q0 2-2 2H2q-2 0-2-2Z" fill="#f4f4f4" />
        <path d="M6.500 10h4v4h-4Z" fill="#f25022" />
        <path d="M11.500 10h4v4h-4Z" fill="#7fba00" />
        <path d="M6.500 15h4v4h-4Z" fill="#00a4ef" />
        <path d="M11.500 15h4v4h-4Z" fill="#ffb900" />
      </svg>
    </TaskButton>
    <TaskButton name="Mail">
      <svg viewBox="0 0 24 22" className="w-6 h-[22px]">
        <path d="M0 7 12 0l12 7v3H0Z" fill="#1167b8" />
        <path d="M3 7h18l-9 8Z" fill="#fff" />
        <path d="M0 7.5 12 16l12-8.500V22H0Z" fill="#2aa5ea" />
        <path d="m3 7 9 7.500L21 7Z" fill="#fff" />
        <path d="m0 22 10-8 2 2 12-8.500V22Z" fill="#1c92e0" />
      </svg>
    </TaskButton>
    <TaskButton name="Chrome" state="open">
      <svg viewBox="0 0 22 22" className="size-[22px]">
        <circle cx="11" cy="11" r="11" fill="#fcc934" />
        <path d="M1.5 5.5A11 11 0 0 1 20.5 5.5H11L6.3 13.8Z" fill="#ea4335" />
        <path d="M1.5 5.5 6.3 13.8 11 16.5 9.5 22A11 11 0 0 1 1.5 5.5Z" fill="#34a853" />
        <circle cx="11" cy="11" r="5.3" fill="#fff" />
        <circle cx="11" cy="11" r="4.2" fill="#4285f4" />
      </svg>
    </TaskButton>
    <TaskButton name="WaveForms" state="active">
      <WaveLogo className="w-[22px] h-[18px]" />
    </TaskButton>
    <TaskButton name="Paint" state="open">
      <svg viewBox="0 0 22 22" className="size-[22px]">
        <path d="M1 8C2 2 9 0 15 2c6 2 7 8 4 12s-8 7-12 5-7-6-6-11Z" fill="#57504b" stroke="#8b8279" />
        <circle cx="7" cy="6" r="2" fill="#c9852e" />
        <circle cx="13" cy="5.5" r="1.8" fill="#3f74c9" />
        <circle cx="17" cy="9.5" r="1.8" fill="#d8502d" />
        <circle cx="15.5" cy="14" r="1.8" fill="#d9a92a" />
        <circle cx="6" cy="13" r="2.4" fill="#2b2725" />
        <path d="m10 11 10 10" stroke="#1a1716" strokeWidth="2" />
      </svg>
    </TaskButton>
    <div className="ml-auto flex items-center text-[14px]">
      <svg viewBox="0 0 18 18" className="size-[18px] mr-[11px]">
        <circle cx="9" cy="9" r="9" fill="#fba919" />
        <path d="M1 13A9 9 0 0 1 13 1c-4 1-10 7-12 12Z" fill="#ffe27a" />
      </svg>
      <span className="w-9 text-[13px]">55°F</span>
      <span className="w-[53px] text-[13px]">Sunny</span>
      <div className="flex items-center gap-2 text-white">
        <Chevron className="rotate-180 w-3 h-[7px]" />
        <svg viewBox="0 0 16 12" className="w-4 h-3 ml-[2px]">
          <path d="M3 7a4 4 0 0 1 7-4l4 5H2Z" fill="#8d8d8d" />
          <path d="M1 9c0-2 2-3 4-2.5C7 4 11 4 12 7c3 0 4 2 3 3.5l-1 1H3C2 11.5 1 10.5 1 9Z" fill="#fff" />
        </svg>
        <svg viewBox="0 0 14 16" className="w-[14px] h-4" fill="none" stroke="#fff" strokeWidth="1.2">
          <path d="M1.5 4.5h7v7h-7ZM8.5 7l3.5-2v6L8.5 9M3 1.5q4-1.500 8 0M3 14.5q4 1.500 8 0" />
        </svg>
        <svg viewBox="0 0 18 17" className="w-[18px] h-[17px]" fill="none" stroke="#fff" strokeWidth="1.2">
          <path d="m1 2.5 15-2v13L1 14Z" />
          <path d="M5 6.5q3-3 6 0V4M11 8.5q-3 3-6 0V11" />
          <circle cx="13" cy="12.5" r="3.8" fill="#ff9a0c" stroke="none" />
        </svg>
        <svg viewBox="0 0 18 14" className="w-[18px] h-[14px]" fill="none" stroke="#fff" strokeWidth="1.2">
          <path d="M1 5h3l4-4v12L4 9H1ZM10 5q1.5 2 0 4M12.5 3q3 4 0 8M15 1q4.5 6 0 12" />
        </svg>
        <svg viewBox="0 0 17 15" className="w-[17px] h-[15px]" fill="none" stroke="#fff" strokeWidth="1.2">
          <path d="M6 3h10v8H4V7M1 .6h4V5H1ZM3 5v8.5M10 11v3M6 14h8" />
        </svg>
      </div>
      <div className="w-[68px] text-center text-[12px] leading-[18px]">
        <div>9:49 AM</div>
        <div>9/25/2021</div>
      </div>
      <button aria-label="Notifications" className="ml-[10px] mr-[18px]">
        <svg viewBox="0 0 17 16" className="w-[17px] h-4" fill="none" stroke="#fff" strokeWidth="1.2">
          <path d="M.6.6h15.8v11.800h-5.400l-2.500 2.800-2.500-2.800H.6Z" />
        </svg>
      </button>
      <div className="w-px h-10 mr-1 bg-[#777]" />
    </div>
  </footer>
);

export default function App() {
  return (
    <div className={clsx("relative bg-[#d6d6d6] text-[11px] leading-[14px] text-black", tahoma)}>
      <Browser />
      <main className="relative mx-[2px] -mt-px border-x border-t border-[#9c9c9c] bg-[#f0f0f0] shadow-[0_0_8px_rgba(0,0,0,0.25)]">
        <WindowHead />
        <Controls />
        <div className="flex">
          <div className="flex-1 min-w-0">
            <StatusBar />
            <Plot />
          </div>
          <SidePanel />
        </div>
      </main>
      <MathDialog />
      <div className="relative">
        <Taskbar />
      </div>
    </div>
  );
}
